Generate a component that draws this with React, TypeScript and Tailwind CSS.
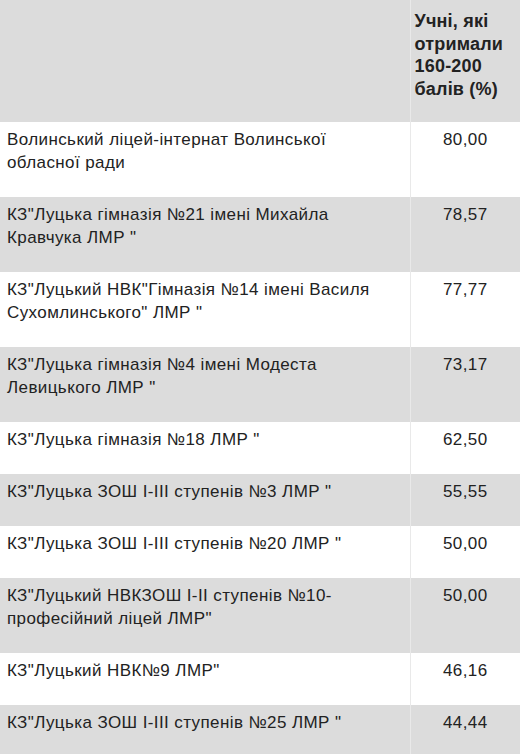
const rows = [
  { name: "Волинський ліцей-інтернат Волинської обласної ради", value: "80,00" },
  { name: "КЗ\"Луцька гімназія №21 імені Михайла Кравчука ЛМР \"", value: "78,57" },
  { name: "КЗ\"Луцький НВК\"Гімназія №14 імені Василя Сухомлинського\" ЛМР \"", value: "77,77" },
  { name: "КЗ\"Луцька гімназія №4 імені Модеста Левицького ЛМР \"", value: "73,17" },
  { name: "КЗ\"Луцька гімназія №18 ЛМР \"", value: "62,50" },
  { name: "КЗ\"Луцька ЗОШ І-ІІІ ступенів №3 ЛМР \"", value: "55,55" },
  { name: "КЗ\"Луцька ЗОШ І-ІІІ ступенів №20 ЛМР \"", value: "50,00" },
  { name: "КЗ\"Луцький НВКЗОШ І-ІІ ступенів №10-професійний ліцей ЛМР\"", value: "50,00" },
  { name: "КЗ\"Луцький НВК№9 ЛМР\"", value: "46,16" },
  { name: "КЗ\"Луцька ЗОШ І-ІІІ ступенів №25 ЛМР \"", value: "44,44" },
];

export default function App() {
  return (
    <div className="w-[520px] h-[754px] overflow-hidden bg-white font-['Liberation_Sans',Arial,sans-serif] text-[17px] leading-[23px] tracking-[0.4px] text-[#222]">
      <table className="w-[520px] table-fixed border-collapse">
        <colgroup>
          <col className="w-[410px]" />
          <col className="w-[110px]" />
        </colgroup>
        <thead>
          <tr className="bg-[#dcdcdc]">
            <th className="h-[122px] border-r border-[#e9e9e9]" />
            <th className="pl-[4px] pr-0 pt-[10px] pb-[20px] text-left align-top font-bold text-[18px] leading-[22.7px] tracking-[0.2px]">
              Учні, які отримали 160-200 балів (%)
            </th>
          </tr>
        </thead>
        <tbody>
          {rows.map((row, i) => (
            <tr key={i} className={i % 2 === 0 ? "bg-white" : "bg-[#dcdcdc]"}>
              <td className="pl-[7px] pr-[26px] pt-[6px] pb-[23px] align-top border-r border-[#e9e9e9]">
                {row.name}
              </td>
              <td className="pt-[6px] pb-[23px] align-top text-center">{row.value}</td>
            </tr>
          ))}
        </tbody>
      </table>
    </div>
  );
}
